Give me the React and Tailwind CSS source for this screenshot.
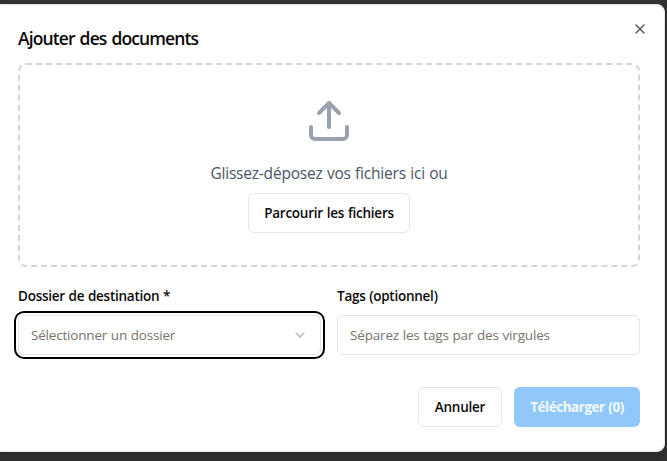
import React from "react";
import { Upload, X, ChevronDown } from "lucide-react";

const outlineButton =
  "inline-flex h-10 items-center justify-center whitespace-nowrap rounded-md border border-[#e5e5e5] bg-white text-[13.5px] font-semibold tracking-[-0.25px] [word-spacing:0.6px] text-[#0c0a09]";

const labelText =
  "mb-[7px] block pt-px text-[13.5px] font-semibold leading-6 tracking-[-0.25px] [word-spacing:0.4px]";

export default function App() {
  return (
    <div className="h-[461px] w-[667px] overflow-hidden bg-[#313131] pt-1 font-['Open_Sans','Noto_Sans',sans-serif]">
      <div className="relative -ml-[7px] flex h-[448px] w-[672px] flex-col rounded-lg border border-[#e5e5e5] bg-white p-6 text-[#0c0a09] shadow-lg">
        <h2 className="h-[18px] whitespace-nowrap text-[17.5px] font-semibold leading-[19px] tracking-[-0.88px] [word-spacing:1.3px]">Ajouter des documents</h2>

        <div className="mt-4 flex flex-col items-center rounded-lg border-2 border-dashed border-gray-300 p-8">
          <Upload className="mb-4 size-12 text-gray-400" />
          <p className="mb-2 whitespace-nowrap text-[15.5px] leading-6 tracking-[-0.2px] [word-spacing:0.5px] text-gray-600">Glissez-déposez vos fichiers ici ou</p>
          <button className={outlineButton + " w-[162px]"}>Parcourir les fichiers</button>
        </div>

        <div className="mt-4 grid grid-cols-2 gap-4">
          <div>
            <label className={labelText}>Dossier de destination *</label>
            <button className="flex h-10 w-full items-center justify-between rounded-md border border-[#e5e5e5] bg-white px-3 text-[13.5px] text-[#78716c] ring-2 ring-black ring-offset-2">
              <span className="tracking-[-0.19px] [word-spacing:0.4px]">Sélectionner un dossier</span>
              <ChevronDown className="size-4 opacity-50" />
            </button>
          </div>
          <div>
            <label className={labelText}>Tags (optionnel)</label>
            <input
              className="h-10 w-full rounded-md border border-[#e5e5e5] bg-white px-3 text-[13.5px] tracking-[-0.17px] [word-spacing:0.4px] placeholder:text-[#78716c]"
              placeholder="Séparez les tags par des virgules"
            />
          </div>
        </div>

        <div className="mt-8 flex justify-end gap-3">
          <button className={outlineButton + " w-[84px]"}>Annuler</button>
          <button className="h-10 w-[126px] whitespace-nowrap rounded-md bg-[#90c8fa] text-[13.5px] font-bold tracking-[-0.48px] [word-spacing:0.6px] text-[#f4faff]">
            Télécharger (0)
          </button>
        </div>

        <button aria-label="Fermer" className="absolute right-4 top-4 text-[#0c0a09] opacity-70">
          <X className="size-4" />
        </button>
      </div>
    </div>
  );
}
